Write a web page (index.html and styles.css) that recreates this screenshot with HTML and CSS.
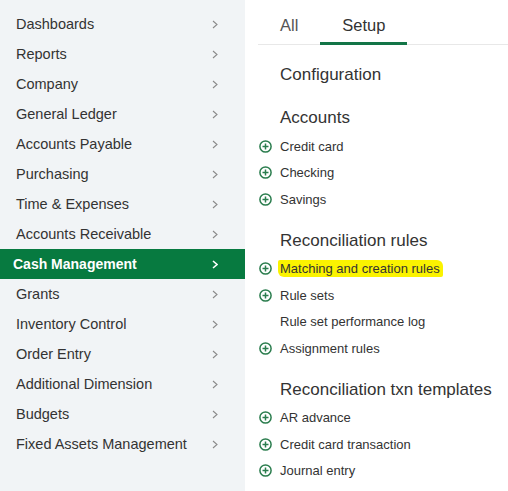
FILE: index.html
```html
<!DOCTYPE html>
<html>
<head>
<meta charset="utf-8">
<link rel="stylesheet" href="styles.css">
</head>
<body>
<div class="app">
  <nav class="sidebar">
    <div class="nav-item"><span>Dashboards</span><svg class="chev" viewBox="0 0 6 9"><polyline points="1,1 5,4.5 1,8"/></svg></div>
    <div class="nav-item"><span>Reports</span><svg class="chev" viewBox="0 0 6 9"><polyline points="1,1 5,4.5 1,8"/></svg></div>
    <div class="nav-item"><span>Company</span><svg class="chev" viewBox="0 0 6 9"><polyline points="1,1 5,4.5 1,8"/></svg></div>
    <div class="nav-item"><span>General Ledger</span><svg class="chev" viewBox="0 0 6 9"><polyline points="1,1 5,4.5 1,8"/></svg></div>
    <div class="nav-item"><span>Accounts Payable</span><svg class="chev" viewBox="0 0 6 9"><polyline points="1,1 5,4.5 1,8"/></svg></div>
    <div class="nav-item"><span>Purchasing</span><svg class="chev" viewBox="0 0 6 9"><polyline points="1,1 5,4.5 1,8"/></svg></div>
    <div class="nav-item"><span>Time &amp; Expenses</span><svg class="chev" viewBox="0 0 6 9"><polyline points="1,1 5,4.5 1,8"/></svg></div>
    <div class="nav-item"><span>Accounts Receivable</span><svg class="chev" viewBox="0 0 6 9"><polyline points="1,1 5,4.5 1,8"/></svg></div>
    <div class="nav-item active"><span>Cash Management</span><svg class="chev" viewBox="0 0 6 9"><polyline points="1,1 5,4.5 1,8"/></svg></div>
    <div class="nav-item"><span>Grants</span><svg class="chev" viewBox="0 0 6 9"><polyline points="1,1 5,4.5 1,8"/></svg></div>
    <div class="nav-item"><span>Inventory Control</span><svg class="chev" viewBox="0 0 6 9"><polyline points="1,1 5,4.5 1,8"/></svg></div>
    <div class="nav-item"><span>Order Entry</span><svg class="chev" viewBox="0 0 6 9"><polyline points="1,1 5,4.5 1,8"/></svg></div>
    <div class="nav-item"><span>Additional Dimension</span><svg class="chev" viewBox="0 0 6 9"><polyline points="1,1 5,4.5 1,8"/></svg></div>
    <div class="nav-item"><span>Budgets</span><svg class="chev" viewBox="0 0 6 9"><polyline points="1,1 5,4.5 1,8"/></svg></div>
    <div class="nav-item"><span>Fixed Assets Management</span><svg class="chev" viewBox="0 0 6 9"><polyline points="1,1 5,4.5 1,8"/></svg></div>
  </nav>
  <main class="main">
    <div class="tabs">
      <div class="tab">All</div>
      <div class="tab selected">Setup</div>
    </div>
    <section class="section">
      <h2 class="heading">Configuration</h2>
    </section>
    <section class="section">
      <h2 class="heading">Accounts</h2>
      <div class="item"><svg class="plus" viewBox="0 0 13 13"><circle cx="6.5" cy="6.5" r="5.6"/><line x1="6.5" y1="3.5" x2="6.5" y2="9.5"/><line x1="3.5" y1="6.5" x2="9.5" y2="6.5"/></svg><span>Credit card</span></div>
      <div class="item"><svg class="plus" viewBox="0 0 13 13"><circle cx="6.5" cy="6.5" r="5.6"/><line x1="6.5" y1="3.5" x2="6.5" y2="9.5"/><line x1="3.5" y1="6.5" x2="9.5" y2="6.5"/></svg><span>Checking</span></div>
      <div class="item"><svg class="plus" viewBox="0 0 13 13"><circle cx="6.5" cy="6.5" r="5.6"/><line x1="6.5" y1="3.5" x2="6.5" y2="9.5"/><line x1="3.5" y1="6.5" x2="9.5" y2="6.5"/></svg><span>Savings</span></div>
    </section>
    <section class="section">
      <h2 class="heading">Reconciliation rules</h2>
      <div class="item"><svg class="plus" viewBox="0 0 13 13"><circle cx="6.5" cy="6.5" r="5.6"/><line x1="6.5" y1="3.5" x2="6.5" y2="9.5"/><line x1="3.5" y1="6.5" x2="9.5" y2="6.5"/></svg><span class="mark">Matching and creation rules</span></div>
      <div class="item"><svg class="plus" viewBox="0 0 13 13"><circle cx="6.5" cy="6.5" r="5.6"/><line x1="6.5" y1="3.5" x2="6.5" y2="9.5"/><line x1="3.5" y1="6.5" x2="9.5" y2="6.5"/></svg><span>Rule sets</span></div>
      <div class="item"><span class="noicon"></span><span>Rule set performance log</span></div>
      <div class="item"><svg class="plus" viewBox="0 0 13 13"><circle cx="6.5" cy="6.5" r="5.6"/><line x1="6.5" y1="3.5" x2="6.5" y2="9.5"/><line x1="3.5" y1="6.5" x2="9.5" y2="6.5"/></svg><span>Assignment rules</span></div>
    </section>
    <section class="section">
      <h2 class="heading">Reconciliation txn templates</h2>
      <div class="item"><svg class="plus" viewBox="0 0 13 13"><circle cx="6.5" cy="6.5" r="5.6"/><line x1="6.5" y1="3.5" x2="6.5" y2="9.5"/><line x1="3.5" y1="6.5" x2="9.5" y2="6.5"/></svg><span>AR advance</span></div>
      <div class="item"><svg class="plus" viewBox="0 0 13 13"><circle cx="6.5" cy="6.5" r="5.6"/><line x1="6.5" y1="3.5" x2="6.5" y2="9.5"/><line x1="3.5" y1="6.5" x2="9.5" y2="6.5"/></svg><span>Credit card transaction</span></div>
      <div class="item"><svg class="plus" viewBox="0 0 13 13"><circle cx="6.5" cy="6.5" r="5.6"/><line x1="6.5" y1="3.5" x2="6.5" y2="9.5"/><line x1="3.5" y1="6.5" x2="9.5" y2="6.5"/></svg><span>Journal entry</span></div>
    </section>
  </main>
</div>
</body>
</html>
```
FILE: styles.css
```css
html, body {
  margin: 0;
  padding: 0;
  background: #ffffff;
  font-family: "Liberation Sans", Arial, sans-serif;
  color: #333333;
}
.app {
  display: flex;
  width: 508px;
  height: 491px;
  overflow: hidden;
}
.sidebar {
  width: 245px;
  flex: none;
  background: #f1f4f6;
  padding-top: 9px;
  box-sizing: border-box;
}
.nav-item {
  height: 30px;
  display: flex;
  align-items: center;
  justify-content: space-between;
  padding: 0 27px 0 16px;
  font-size: 14.5px;
  color: #333333;
}
.chev {
  width: 6px;
  height: 9px;
  fill: none;
  stroke: #8a8a8a;
  stroke-width: 1.1;
}
.nav-item.active {
  background: #077a40;
  color: #ffffff;
  font-weight: bold;
  font-size: 14px;
  padding-left: 13px;
}
.nav-item.active .chev {
  stroke: #ffffff;
  stroke-width: 1.6;
}
.main {
  flex: 1;
  padding-left: 14px;
}
.tabs {
  display: flex;
  margin-left: -1px;
  border-bottom: 1px solid #e8e8e8;
}
.tab {
  padding: 15px 22px 7px;
  line-height: 20px;
  font-size: 16.5px;
  color: #555555;
  border-bottom: 3px solid transparent;
  margin-bottom: -1px;
}
.tab.selected {
  color: #333333;
  border-bottom-color: #137547;
}
.section {
  margin-bottom: 17px;
}
.tabs + .section {
  margin-top: 19px;
}
.heading {
  margin: 0;
  padding: 0 0 4px 21px;
  font-size: 17px;
  font-weight: normal;
  line-height: 22px;
  color: #333333;
}
.item {
  height: 26.5px;
  display: flex;
  align-items: center;
  gap: 8px;
  font-size: 13px;
  color: #333333;
}
.plus {
  width: 13px;
  height: 13px;
  flex: none;
  fill: none;
  stroke: #2b7d4e;
  stroke-width: 1.5;
}
.noicon {
  width: 13px;
  flex: none;
}
.mark {
  background: #fbf300;
  padding: 1px 3px 1px 2px;
  margin-left: -2px;
  border-radius: 2px 6px 2px 6px;
}
```
